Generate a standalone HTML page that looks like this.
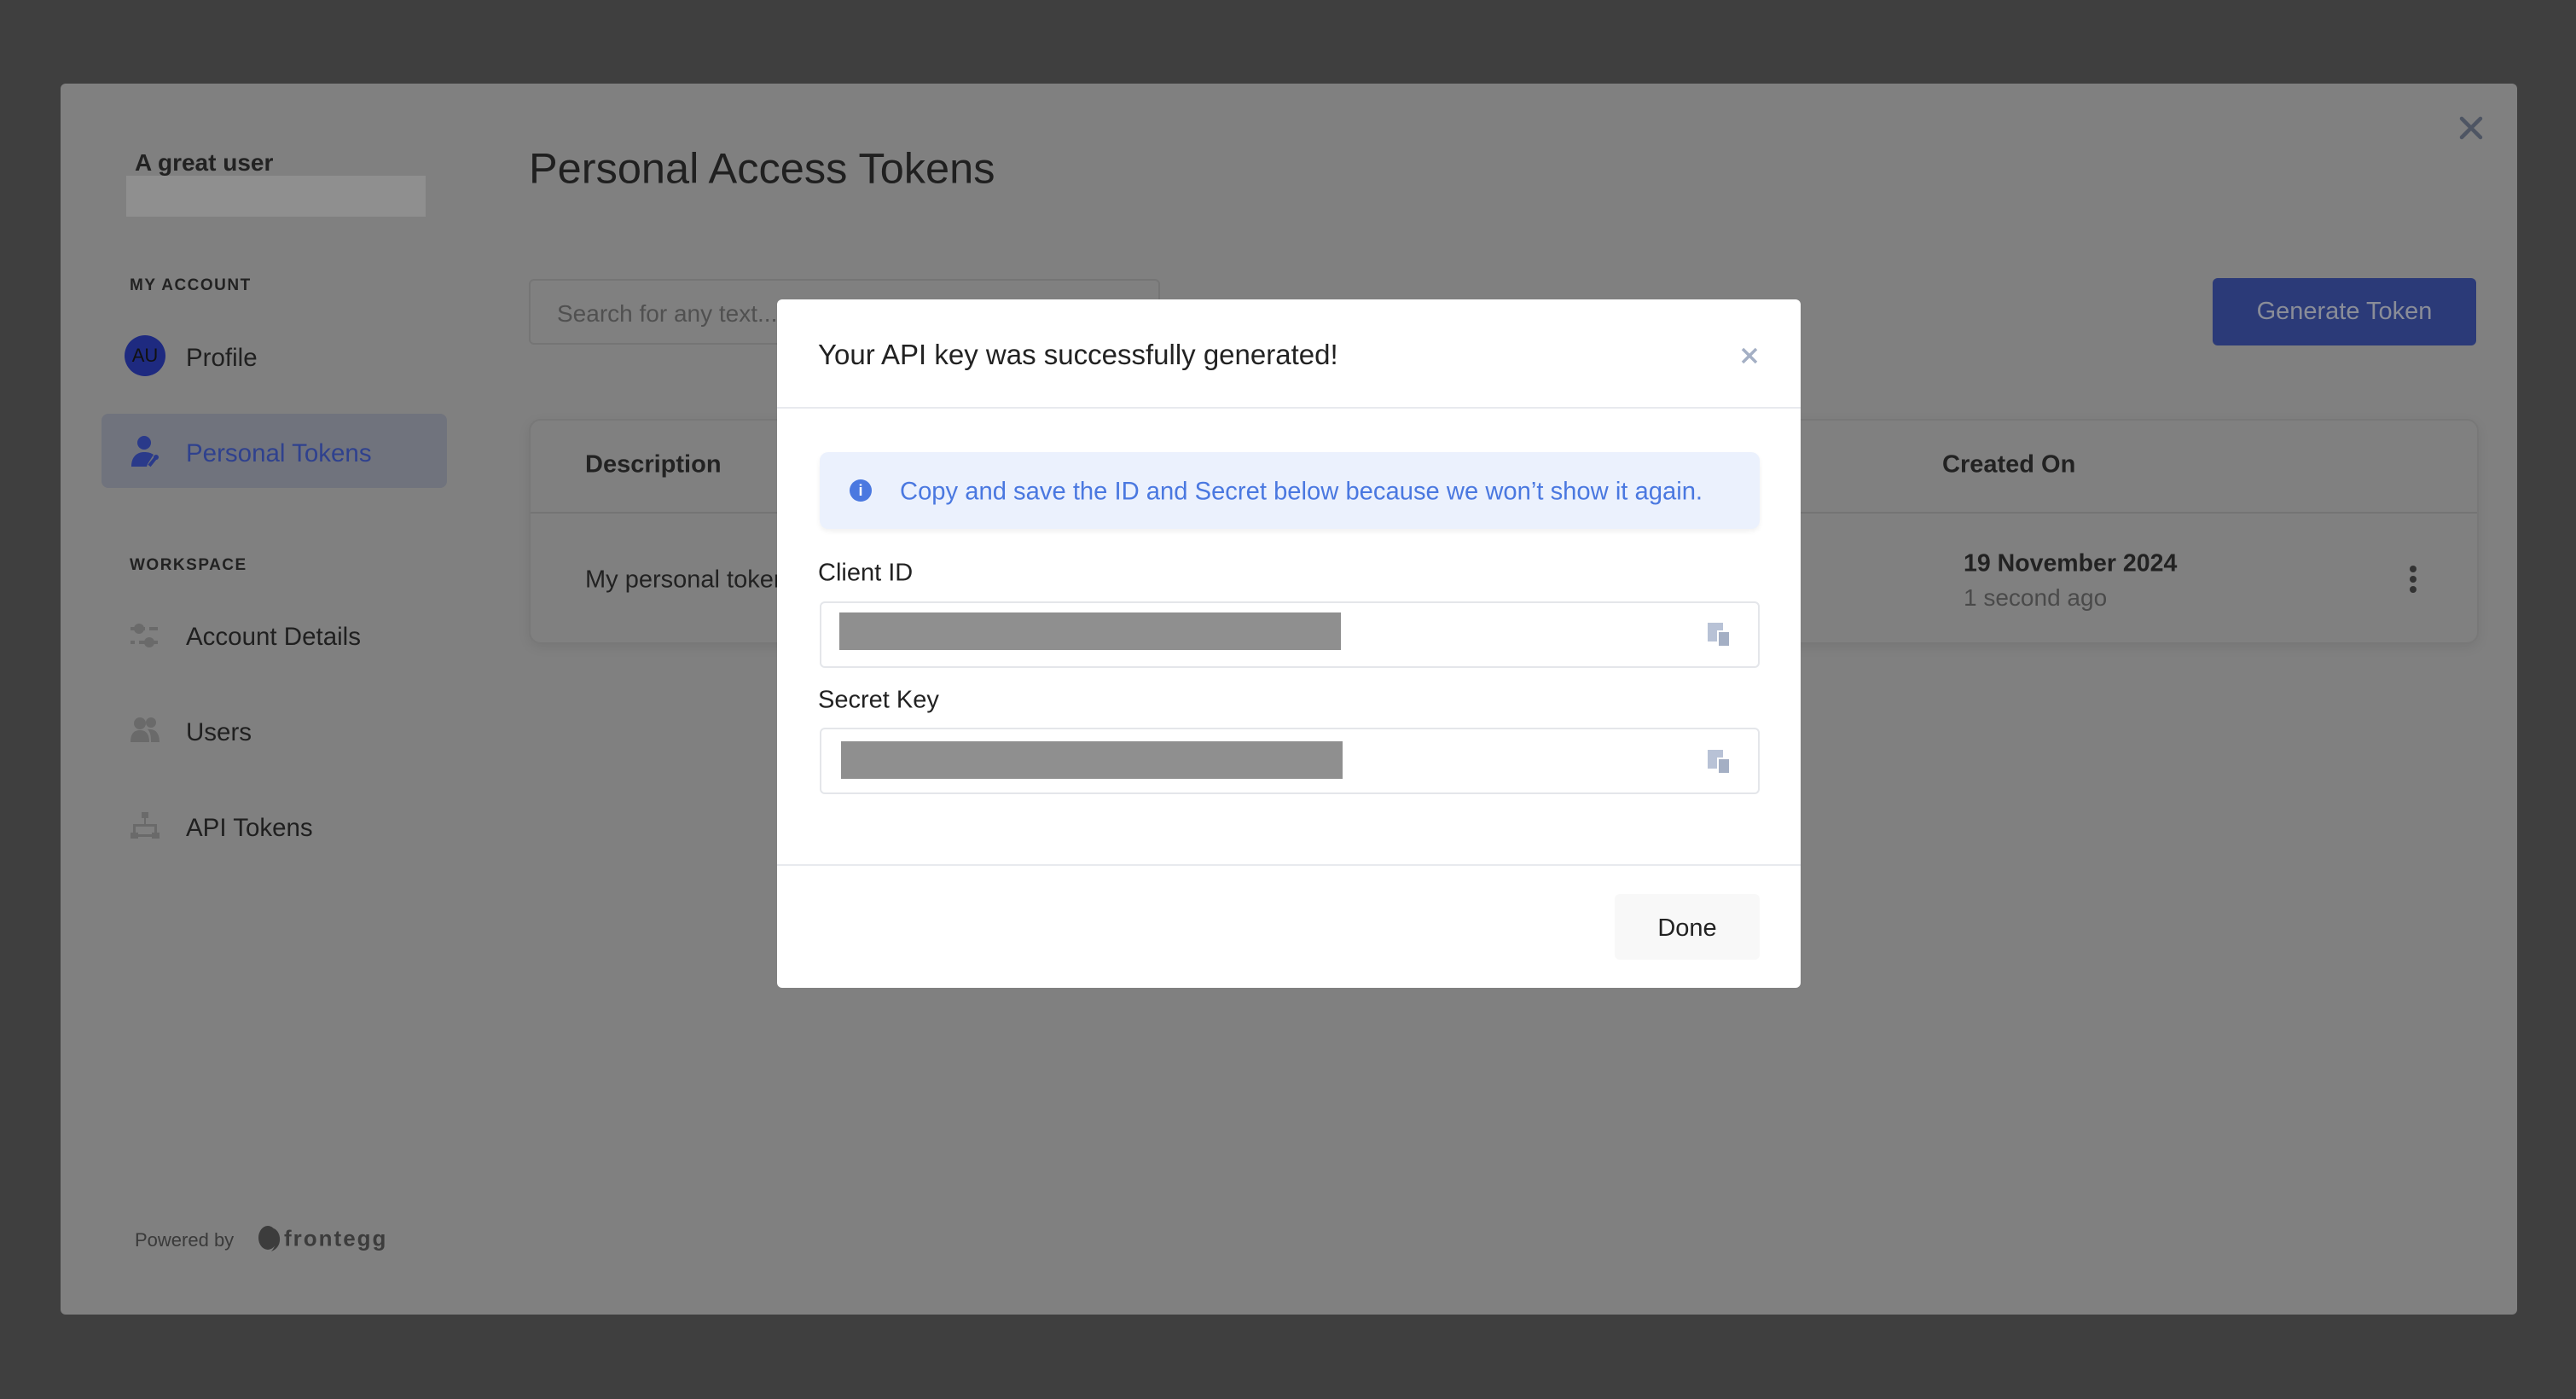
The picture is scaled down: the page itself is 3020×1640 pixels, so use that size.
<!DOCTYPE html>
<html><head><meta charset="utf-8"><style>
*{margin:0;padding:0;box-sizing:border-box}
body{width:3020px;height:1640px;background:#3f3f3f;font-family:"Liberation Sans",sans-serif;position:relative;overflow:hidden;color:#202020}
.a{position:absolute;white-space:nowrap}
.panel{position:absolute;left:71px;top:98px;width:2880px;height:1443px;background:#808080;border-radius:6px}
.nav{font-size:29.5px;left:218px;transform:translateY(-50%)}
.sec{font-size:19px;font-weight:bold;letter-spacing:1.5px;left:152px;transform:translateY(-50%);color:#222}
.modal{position:absolute;left:911px;top:351px;width:1200px;height:807px;background:#fff;border-radius:6px}
.inp{position:absolute;left:50px;width:1102px;height:78px;border:2px solid #e4e6ea;border-radius:6px;background:#fff}
.bar{position:absolute;background:#8f8f8f;height:44px;width:588px}
</style></head><body>
<div class="panel"></div>
<svg class="a" style="left:2883px;top:136px" width="28" height="28" viewBox="0 0 28 28"><path d="M3 3L25 25M25 3L3 25" stroke="#4e5563" stroke-width="4.5" stroke-linecap="round"/></svg>

<div class="a" style="left:158px;top:191px;transform:translateY(-50%);font-size:28px;font-weight:bold;color:#222">A great user</div>
<div class="a" style="left:148px;top:206px;width:351px;height:48px;background:#8f8f8f"></div>

<div class="a sec" style="top:335px">MY ACCOUNT</div>
<div class="a" style="left:146px;top:393px;width:48px;height:48px;border-radius:50%;background:#1e2a80;color:#111;font-size:22px;text-align:center;line-height:48px">AU</div>
<div class="a nav" style="top:420px">Profile</div>

<div class="a" style="left:119px;top:485px;width:405px;height:87px;background:#70737d;border-radius:8px"></div>
<svg class="a" style="left:153px;top:510px" width="34" height="38" viewBox="0 0 34 38"><circle cx="16" cy="9" r="8" fill="#2a3a8a"/><path d="M1 37 C1 25 8 20 16 20 C21 20 24 21 27 23 L20 34 L19 37Z" fill="#2a3a8a"/><path d="M22 36 L30 26" stroke="#2a3a8a" stroke-width="4"/><circle cx="30" cy="26" r="3" fill="#2a3a8a"/></svg>
<div class="a nav" style="top:532px;color:#2f418e">Personal Tokens</div>

<div class="a sec" style="top:663px">WORKSPACE</div>
<svg class="a" style="left:153px;top:730px" width="34" height="30" viewBox="0 0 34 30"><rect x="0" y="5" width="32" height="4" fill="#6a6a6a"/><circle cx="10" cy="7" r="6" fill="#6a6a6a"/><rect x="0" y="21" width="32" height="4" fill="#6a6a6a"/><circle cx="22" cy="23" r="6" fill="#6a6a6a"/><rect x="17" y="5" width="5" height="4" fill="#808080"/><rect x="5" y="21" width="5" height="4" fill="#808080"/></svg>
<div class="a nav" style="top:747px">Account Details</div>
<svg class="a" style="left:153px;top:840px" width="34" height="30" viewBox="0 0 34 30"><circle cx="11" cy="8" r="7" fill="#6a6a6a"/><circle cx="24" cy="7" r="6" fill="#6a6a6a"/><path d="M0 30 C0 19 5 16 11 16 C17 16 22 19 22 30Z" fill="#6a6a6a"/><path d="M20 15 C28 14 34 18 34 30 L24 30 C24 22 23 18 20 15Z" fill="#6a6a6a"/></svg>
<div class="a nav" style="top:859px">Users</div>
<svg class="a" style="left:153px;top:952px" width="34" height="32" viewBox="0 0 34 32"><rect x="13" y="0" width="8" height="7" fill="#6a6a6a"/><rect x="16" y="7" width="2" height="8" fill="#6a6a6a"/><rect x="3" y="14" width="28" height="3" fill="#6a6a6a"/><rect x="3" y="14" width="3" height="10" fill="#6a6a6a"/><rect x="28" y="14" width="3" height="10" fill="#6a6a6a"/><rect x="0" y="24" width="9" height="7" fill="#6a6a6a"/><rect x="25" y="24" width="9" height="7" fill="#6a6a6a"/><rect x="9" y="26" width="16" height="3" fill="#6a6a6a"/></svg>
<div class="a nav" style="top:971px">API Tokens</div>

<div class="a" style="left:158px;top:1454px;transform:translateY(-50%);font-size:22px;color:#3a3a3a">Powered by</div>
<svg class="a" style="left:302px;top:1436px" width="30" height="32" viewBox="0 0 30 32"><ellipse cx="12" cy="15" rx="11" ry="14" fill="#3c3c3c"/><path d="M19 4 C28 8 30 26 16 31 C22 25 24 12 19 4Z" fill="#3c3c3c"/></svg>
<div class="a" style="left:333px;top:1452px;transform:translateY(-50%);font-size:26px;font-weight:bold;letter-spacing:2px;color:#3c3c3c">frontegg</div>

<div class="a" style="left:620px;top:197px;transform:translateY(-50%);font-size:50.5px;color:#202020">Personal Access Tokens</div>

<div class="a" style="left:620px;top:327px;width:740px;height:77px;border:2px solid #757575;border-radius:6px"></div>
<div class="a" style="left:653px;top:368px;transform:translateY(-50%);font-size:28px;color:#505050">Search for any text...</div>

<div class="a" style="left:2594px;top:326px;width:309px;height:79px;background:#2b3a78;border-radius:6px;color:#8a8d98;font-size:29px;text-align:center;line-height:79px">Generate Token</div>

<div class="a" style="left:620px;top:491px;width:2286px;height:264px;border:2px solid #787878;border-radius:14px;box-shadow:0 4px 14px rgba(0,0,0,.08)"></div>
<div class="a" style="left:622px;top:600px;width:2282px;height:2px;background:#747474"></div>
<div class="a" style="left:686px;top:545px;transform:translateY(-50%);font-size:29px;font-weight:bold;color:#222">Description</div>
<div class="a" style="left:2277px;top:545px;transform:translateY(-50%);font-size:29px;font-weight:bold;color:#222">Created On</div>
<div class="a" style="left:686px;top:680px;transform:translateY(-50%);font-size:29px;color:#222">My personal token</div>
<div class="a" style="left:2302px;top:661px;transform:translateY(-50%);font-size:28.5px;font-weight:bold;color:#222">19 November 2024</div>
<div class="a" style="left:2302px;top:701px;transform:translateY(-50%);font-size:28px;color:#4a4a4a">1 second ago</div>
<svg class="a" style="left:2823px;top:662px" width="12" height="34" viewBox="0 0 12 34"><circle cx="6" cy="5" r="4" fill="#333"/><circle cx="6" cy="17" r="4" fill="#333"/><circle cx="6" cy="29" r="4" fill="#333"/></svg>

<div class="modal">
  <div class="a" style="left:48px;top:65px;transform:translateY(-50%);font-size:33px;color:#222">Your API key was successfully generated!</div>
  <svg class="a" style="left:1130px;top:56px" width="20" height="20" viewBox="0 0 20 20"><path d="M2 2L18 18M18 2L2 18" stroke="#a4afc4" stroke-width="3.5"/></svg>
  <div class="a" style="left:0;top:126px;width:1200px;height:2px;background:#e8eaee"></div>
  <div class="a" style="left:50px;top:179px;width:1102px;height:90px;background:#ebf1fd;border-radius:10px;box-shadow:0 3px 6px rgba(0,0,0,.06)"></div>
  <div class="a" style="left:85px;top:211px;width:26px;height:26px;border-radius:50%;background:#4a78e0;color:#fff;font-size:18px;font-weight:bold;text-align:center;line-height:26px">i</div>
  <div class="a" style="left:144px;top:226px;transform:translateY(-50%);font-size:29.2px;color:#4a78e0">Copy and save the ID and Secret below because we won’t show it again.</div>
  <div class="a" style="left:48px;top:321px;transform:translateY(-50%);font-size:29px;color:#222">Client ID</div>
  <div class="inp" style="top:354px"></div>
  <div class="bar" style="left:73px;top:367px"></div>
  <svg class="a" style="left:1091px;top:379px" width="30" height="30" viewBox="0 0 30 30"><rect x="0" y="0" width="18" height="22" fill="#b8c2d6"/><rect x="12" y="10" width="14" height="18" fill="#a4afc4" stroke="#fff" stroke-width="2"/></svg>
  <div class="a" style="left:48px;top:470px;transform:translateY(-50%);font-size:29px;color:#222">Secret Key</div>
  <div class="inp" style="top:502px"></div>
  <div class="bar" style="left:75px;top:518px"></div>
  <svg class="a" style="left:1091px;top:528px" width="30" height="30" viewBox="0 0 30 30"><rect x="0" y="0" width="18" height="22" fill="#b8c2d6"/><rect x="12" y="10" width="14" height="18" fill="#a4afc4" stroke="#fff" stroke-width="2"/></svg>
  <div class="a" style="left:0;top:662px;width:1200px;height:2px;background:#e8eaee"></div>
  <div class="a" style="left:982px;top:697px;width:170px;height:77px;background:#f8f8f8;border-radius:6px;font-size:29px;color:#222;text-align:center;line-height:80px">Done</div>
</div>
</body></html>
